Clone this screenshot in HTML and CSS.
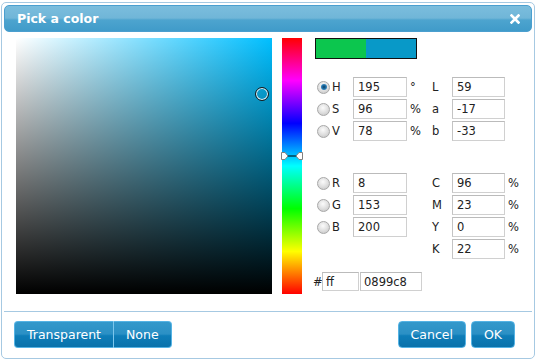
FILE: index.html
```html
<!DOCTYPE html>
<html lang="en">
<head>
  <meta charset="UTF-8">
  <title>Pick a color</title>
  <link rel="stylesheet" href="styles.css">
</head>
<body>
  <div class="dialog">
    <div class="titlebar">
      <span class="title">Pick a color</span>
      <span class="close">
        <svg width="10" height="10" viewBox="0 0 10 10"><path d="M1.5 1.5 L8.5 8.5 M8.5 1.5 L1.5 8.5" stroke="#fff" stroke-width="2.6" stroke-linecap="square"/></svg>
      </span>
    </div>

    <div class="content">
      <div class="map">
        <span class="marker"></span>
      </div>
      <div class="hue">
        <svg class="hue-arrows" width="22" height="10" viewBox="0 0 22 10">
          <line x1="6" y1="5" x2="16" y2="5" stroke="#000" stroke-width="1"/>
          <polygon points="0.5,1.5 4,1.5 7,5 4,8.5 0.5,8.5" fill="#fff" stroke="#808080"/>
          <polygon points="21.5,1.5 18,1.5 15,5 18,8.5 21.5,8.5" fill="#fff" stroke="#808080"/>
        </svg>
      </div>

      <div class="panel">
        <div class="swatch"><span class="old"></span><span class="new"></span></div>

        <div class="fields">
          <div class="row">
            <div class="half left"><span class="radio checked"></span><label>H</label><input type="text" value="195"><span class="unit">&deg;</span></div>
            <div class="half"><label>L</label><input type="text" value="59"><span class="unit"></span></div>
          </div>
          <div class="row">
            <div class="half left"><span class="radio"></span><label>S</label><input type="text" value="96"><span class="unit">%</span></div>
            <div class="half"><label>a</label><input type="text" value="-17"><span class="unit"></span></div>
          </div>
          <div class="row">
            <div class="half left"><span class="radio"></span><label>V</label><input type="text" value="78"><span class="unit">%</span></div>
            <div class="half"><label>b</label><input type="text" value="-33"><span class="unit"></span></div>
          </div>
        </div>

        <div class="fields rgb">
          <div class="row">
            <div class="half left"><span class="radio"></span><label>R</label><input type="text" value="8"><span class="unit"></span></div>
            <div class="half"><label>C</label><input type="text" value="96"><span class="unit">%</span></div>
          </div>
          <div class="row">
            <div class="half left"><span class="radio"></span><label>G</label><input type="text" value="153"><span class="unit"></span></div>
            <div class="half"><label>M</label><input type="text" value="23"><span class="unit">%</span></div>
          </div>
          <div class="row">
            <div class="half left"><span class="radio"></span><label>B</label><input type="text" value="200"><span class="unit"></span></div>
            <div class="half"><label>Y</label><input type="text" value="0"><span class="unit">%</span></div>
          </div>
          <div class="row">
            <div class="half left"></div>
            <div class="half"><label>K</label><input type="text" value="22"><span class="unit">%</span></div>
          </div>
        </div>

        <div class="hex">
          <label>#</label><input type="text" class="alpha" value="ff"><input type="text" class="code" value="0899c8">
        </div>
      </div>
    </div>

    <div class="footer">
      <div class="group">
        <button class="btn">Transparent</button><button class="btn">None</button>
      </div>
      <div class="actions">
        <button class="btn">Cancel</button>
        <button class="btn">OK</button>
      </div>
    </div>
  </div>
</body>
</html>
```

FILE: styles.css
```css
body {
  margin: 0;
  background: #fff;
  font-family: "DejaVu Sans", Verdana, sans-serif;
  color: #222;
}
.dialog {
  margin: 2px 1px 0 1px;
  width: 534px;
  height: 357px;
  box-sizing: border-box;
  border: 1px solid #a6c9e2;
  border-radius: 5px;
  padding: 2px;
  background: #fff;
}
.titlebar {
  height: 27px;
  box-sizing: border-box;
  border: 1px solid #4b9fcf;
  border-radius: 5px;
  background: linear-gradient(to bottom, #7bbddd 0%, #70b6d8 48%, #4da4cf 56%, #409bc9 100%);
  display: flex;
  align-items: center;
  justify-content: space-between;
  padding: 0 11px 0 12px;
}
.title {
  color: #fff;
  font-weight: bold;
  font-size: 12.5px;
}
.close {
  display: flex;
}
.content {
  height: 279px;
  box-sizing: border-box;
  padding: 6px 0 0 12px;
  display: flex;
  align-items: flex-start;
}
.map {
  width: 256px;
  height: 256px;
  position: relative;
  background: linear-gradient(to bottom, rgba(0, 0, 0, 0), #000), linear-gradient(to right, #fff, #00bfff);
}
.marker {
  position: absolute;
  left: 239px;
  top: 49px;
  width: 14px;
  height: 14px;
  box-sizing: border-box;
  border-radius: 50%;
  border: 1px solid #1a1a1a;
  box-shadow: inset 0 0 0 1px #e8f4fa;
}
.hue {
  width: 20px;
  height: 256px;
  margin-left: 10px;
  position: relative;
  background: linear-gradient(to bottom, #f00 0%, #f0f 16.67%, #00f 33.33%, #0ff 50%, #0f0 66.67%, #ff0 83.33%, #f00 100%);
}
.hue-arrows {
  position: absolute;
  left: -1px;
  top: 113px;
}
.panel {
  margin-left: 13px;
  display: flex;
  flex-direction: column;
  font-size: 11.5px;
}
.swatch {
  width: 102px;
  height: 21px;
  box-sizing: border-box;
  border: 1px solid #111;
  display: flex;
}
.swatch span {
  flex: 1;
}
.old {
  background: #0cc64e;
}
.new {
  background: #0899c8;
}
.fields {
  margin-top: 18px;
}
.fields.rgb {
  margin-top: 30px;
}
.row {
  display: flex;
  height: 20px;
  margin-bottom: 2px;
}
.half {
  display: flex;
  align-items: center;
}
.half.left {
  width: 117px;
}
.radio {
  width: 13px;
  height: 13px;
  box-sizing: border-box;
  border-radius: 50%;
  border: 1px solid #a8a8a8;
  background: radial-gradient(circle at 45% 35%, #fbfbfb 0%, #e0e0e0 50%, #c0c0c0 100%);
  margin: 0 2px 0 2px;
  position: relative;
}
.radio.checked::after {
  content: '';
  position: absolute;
  left: 2.5px;
  top: 2.5px;
  width: 6px;
  height: 6px;
  border-radius: 50%;
  background: radial-gradient(circle at 50% 50%, #0b3a5e 0%, #1f6fa6 45%, #55a8dc 100%);
}
.half label {
  width: 21px;
}
.half:not(.left) label {
  width: 20px;
}
input {
  height: 20px;
  box-sizing: border-box;
  border: 1px solid #d0d0d0;
  border-top-color: #bbb;
  border-left-color: #c4c4c4;
  padding: 0 4px;
  font-family: "DejaVu Sans", Verdana, sans-serif;
  font-size: 11.5px;
  color: #222;
  background: #fff;
  outline: none;
}
.half.left input {
  width: 54px;
}
.half input {
  width: 53px;
}
.unit {
  padding-left: 3px;
  width: 22px;
}
.hex {
  margin-top: 11px;
  display: flex;
  align-items: center;
}
.hex label {
  width: 9px;
  margin-left: -2px;
}
.hex input {
  height: 19px;
  padding: 0 3px;
}
.hex .alpha {
  width: 37px;
  margin-right: 1px;
}
.hex .code {
  width: 62px;
}
.footer {
  border-top: 1px solid #a6c9e2;
  padding: 9px 17px 0 10px;
  display: flex;
  justify-content: space-between;
}
.btn {
  height: 27px;
  box-sizing: border-box;
  border: 1px solid #55b3e4;
  border-radius: 4px;
  background: linear-gradient(to bottom, #3398cb 0%, #2b90c5 48%, #0e7db8 55%, #0a72ab 100%);
  color: #fff;
  font-family: "DejaVu Sans", Verdana, sans-serif;
  font-size: 12.5px;
  padding: 0 12px;
  cursor: pointer;
}
.group {
  display: flex;
}
.group .btn:first-child {
  border-radius: 4px 0 0 4px;
  border-right: 1px solid #7cc6ec;
}
.group .btn:last-child {
  border-radius: 0 4px 4px 0;
  border-left: none;
}
.actions {
  display: flex;
  gap: 5px;
}
```
